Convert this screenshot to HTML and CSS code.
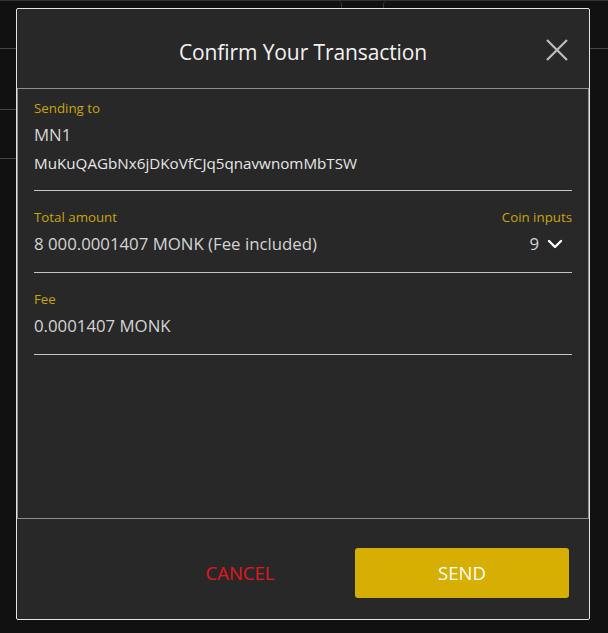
FILE: index.html
```html
<!DOCTYPE html>
<html>
<head>
<meta charset="utf-8">
<link rel="stylesheet" href="styles.css">
</head>
<body>
<div class="backdrop">
  <div class="card card-left">
    <div class="row r1"></div>
    <div class="row r2"></div>
    <div class="row r3"></div>
  </div>
  <div class="card card-right">
    <div class="row r1"></div>
  </div>
</div>

<div class="modal">
  <div class="modal-header">
    <h1 class="title">Confirm Your Transaction</h1>
    <button class="close" aria-label="Close">
      <svg width="22" height="22" viewBox="0 0 22 22"><path d="M1 1 L21 21 M21 1 L1 21" stroke="#bdbdbd" stroke-width="2.2" fill="none"/></svg>
    </button>
  </div>
  <div class="modal-body">
    <div class="field first">
      <div class="label">Sending to</div>
      <div class="value">MN1</div>
      <div class="address">MuKuQAGbNx6jDKoVfCJq5qnavwnomMbTSW</div>
    </div>
    <div class="field split">
      <div class="col">
        <div class="label">Total amount</div>
        <div class="value">8 000.0001407 MONK (Fee included)</div>
      </div>
      <div class="col right">
        <div class="label">Coin inputs</div>
        <div class="value select">9
          <svg class="chev" width="16" height="10" viewBox="0 0 16 10"><path d="M2 2 L8 8 L14 2" stroke="#ffffff" stroke-width="2.4" fill="none" stroke-linecap="round" stroke-linejoin="round"/></svg>
        </div>
      </div>
    </div>
    <div class="field">
      <div class="label">Fee</div>
      <div class="value">0.0001407 MONK</div>
    </div>
  </div>
  <div class="modal-footer">
    <button class="btn btn-cancel">CANCEL</button>
    <button class="btn btn-send">SEND</button>
  </div>
</div>
</body>
</html>
```

FILE: styles.css
```css
* { box-sizing: border-box; }
html, body { margin: 0; padding: 0; }
body {
  background: #111111;
  width: 608px;
  height: 633px;
  overflow: hidden;
  font-family: "Open Sans", "Noto Sans", sans-serif;
  position: relative;
}
.backdrop {
  display: flex;
  justify-content: space-between;
  height: 200px;
  border-top: 1px solid #333333;
}
.card {
  height: 100%;
  border-right: 1px solid #3a3a3a;
  border-left: 1px solid #3a3a3a;
  border-top-right-radius: 4px;
  border-top-left-radius: 4px;
  background: #111111;
}
.card-left { width: 342px; border-left: none; }
.card-right { width: 225px; border-right: none; }
.row { border-bottom: 1px solid #454545; }
.card-left .r1 { height: 48px; }
.card-left .r2 { height: 61px; }
.card-left .r3 { height: 49px; }
.card-right .r1 { height: 48px; }

.modal {
  position: absolute;
  left: 16px;
  top: 8px;
  width: 574px;
  height: 612px;
  background: #282828;
  border: 1px solid #e4e4e4;
  border-radius: 2px;
  display: flex;
  flex-direction: column;
}
.modal-header {
  height: 79px;
  position: relative;
  display: flex;
  align-items: center;
  justify-content: center;
  padding-top: 6px;
}
.title {
  margin: 0;
  font-weight: 400;
  font-size: 21px;
  color: #f2f2f2;
  letter-spacing: -0.1px;
}
.close {
  position: absolute;
  right: 21px;
  top: 30px;
  width: 22px;
  height: 22px;
  padding: 0;
  border: none;
  background: transparent;
  display: flex;
}
.modal-body {
  height: 431px;
  border: 1px solid #8c8f93;
  padding: 0 16px;
}
.field {
  padding: 17px 0 18px;
  border-bottom: 1px solid #c4c4c4;
}
.field.first { padding: 10px 0 17px; }
.field.split { display: flex; justify-content: space-between; }
.col.right { display: flex; flex-direction: column; align-items: flex-end; }
.label {
  font-size: 13.3px;
  line-height: 18px;
  color: #c9a50c;
}
.value {
  margin-top: 8px;
  font-size: 16.8px;
  line-height: 20px;
  color: #d4d4d4;
}
.address {
  margin-top: 8px;
  font-size: 15.2px;
  line-height: 20px;
  color: #e6e6e6;
}
.select {
  display: flex;
  align-items: center;
  gap: 8px;
  padding-right: 9px;
}
.chev { display: block; }
.modal-footer {
  flex: 1;
  display: flex;
  justify-content: flex-end;
  align-items: flex-start;
  gap: 8px;
  padding: 29px 20px 0 0;
}
.btn {
  width: 214px;
  height: 50px;
  border: none;
  border-radius: 3px;
  font-family: "Open Sans", "Noto Sans", sans-serif;
  font-size: 18.5px;
  padding: 0 0 2px;
}
.btn-cancel {
  background: transparent;
  color: #e4161f;
}
.btn-send {
  background: #d7ae02;
  color: #ffffff;
}
```
